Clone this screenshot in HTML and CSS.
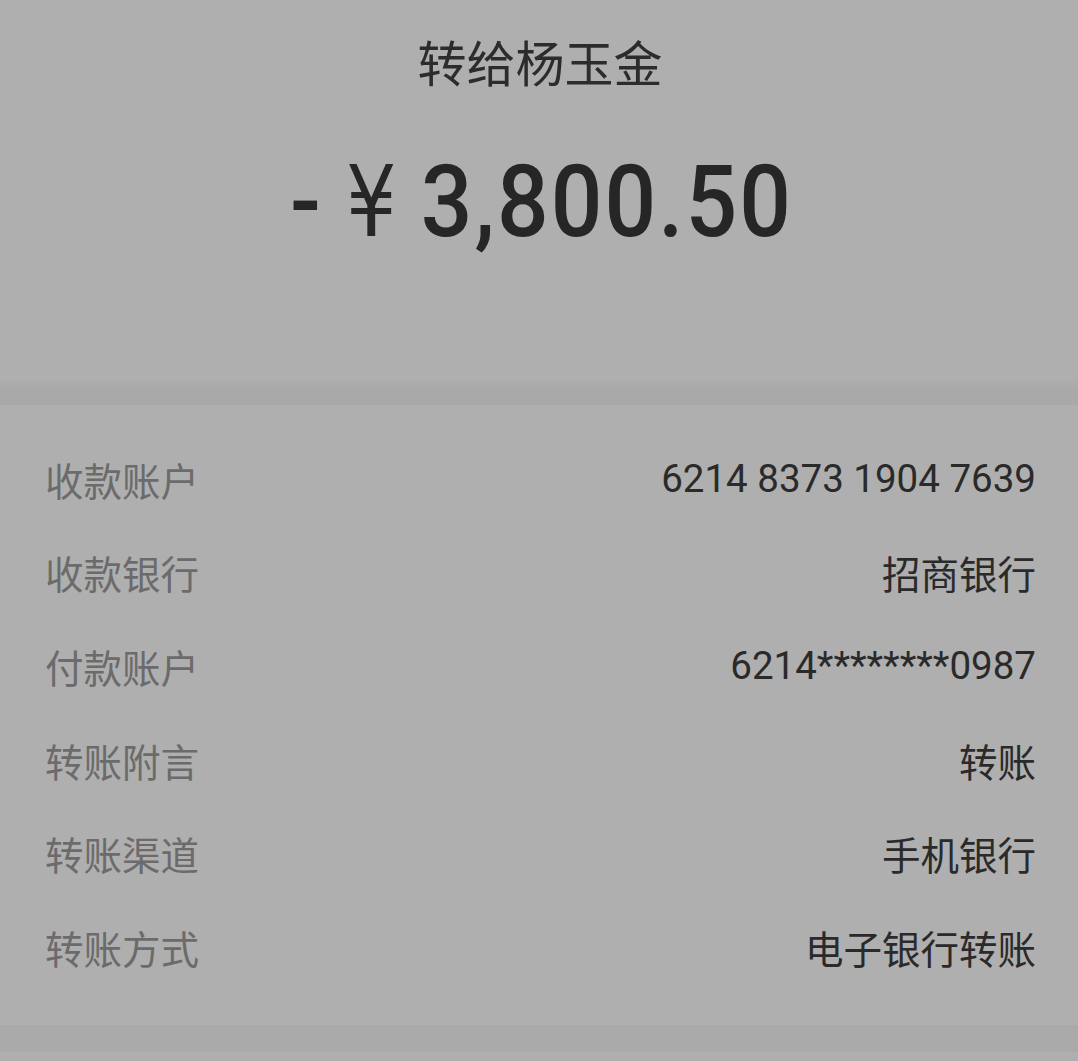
FILE: index.html
```html
<!DOCTYPE html>
<html lang="zh-CN">
<head>
<meta charset="utf-8">
<link rel="stylesheet" href="styles.css">
</head>
<body>
<div class="page">
  <section class="head">
    <div class="title">转给杨玉金</div>
    <div class="amount"><span class="minus">-</span><span class="yen">¥</span><span class="num">3,800.50</span></div>
  </section>
  <div class="band"></div>
  <section class="details">
    <div class="row"><span class="label">收款账户</span><span class="value">6214 8373 1904 7639</span></div>
    <div class="row"><span class="label">收款银行</span><span class="value">招商银行</span></div>
    <div class="row"><span class="label">付款账户</span><span class="value">6214********0987</span></div>
    <div class="row"><span class="label">转账附言</span><span class="value">转账</span></div>
    <div class="row"><span class="label">转账渠道</span><span class="value">手机银行</span></div>
    <div class="row"><span class="label">转账方式</span><span class="value">电子银行转账</span></div>
  </section>
  <div class="band band-bottom"></div>
  <div class="tail"></div>
</div>
</body>
</html>
```

FILE: styles.css
```css
html, body {
  margin: 0;
  padding: 0;
  background: #afafaf;
}
.page {
  width: 1078px;
  height: 1061px;
  overflow: hidden;
  font-family: "Noto Sans CJK SC", "Noto Sans", sans-serif;
  display: flex;
  flex-direction: column;
}
.head {
  height: 380px;
  display: flex;
  flex-direction: column;
  align-items: center;
}
.title {
  margin-top: 27px;
  font-size: 49px;
  line-height: 68px;
  color: #2c2c2c;
  padding-left: 2px;
}
.amount {
  margin-top: 57px;
  display: flex;
  align-items: baseline;
  color: #262626;
  font-family: Roboto, sans-serif;
  font-weight: 500;
  line-height: 100px;
  margin-left: 4px;
  transform: scaleX(0.9);
}
.minus {
  font-size: 101px;
  margin-right: 28px;
}
.yen {
  font-family: "DejaVu Sans Condensed", sans-serif;
  font-weight: normal;
  font-size: 98px;
  margin-right: 27px;
}
.num {
  font-size: 101px;
  letter-spacing: 2.3px;
}
.band {
  height: 25px;
  background: linear-gradient(#adadad, #a9a9a9 40%, #a9a9a9);
}
.details {
  height: 620px;
  padding: 27px 42px 0 45px;
  box-sizing: border-box;
  display: flex;
  flex-direction: column;
}
.row {
  height: 93.6px;
  display: flex;
  justify-content: space-between;
  align-items: center;
}
.label {
  font-size: 38.5px;
  color: #6b6b6b;
}
.value {
  font-family: Roboto, "Noto Sans CJK SC", sans-serif;
  font-size: 38.5px;
  color: #2a2a2a;
}
.band-bottom {
  height: 27px;
  background: #aaaaaa;
}
.tail {
  flex: 1;
  background: #afafaf;
}
```
